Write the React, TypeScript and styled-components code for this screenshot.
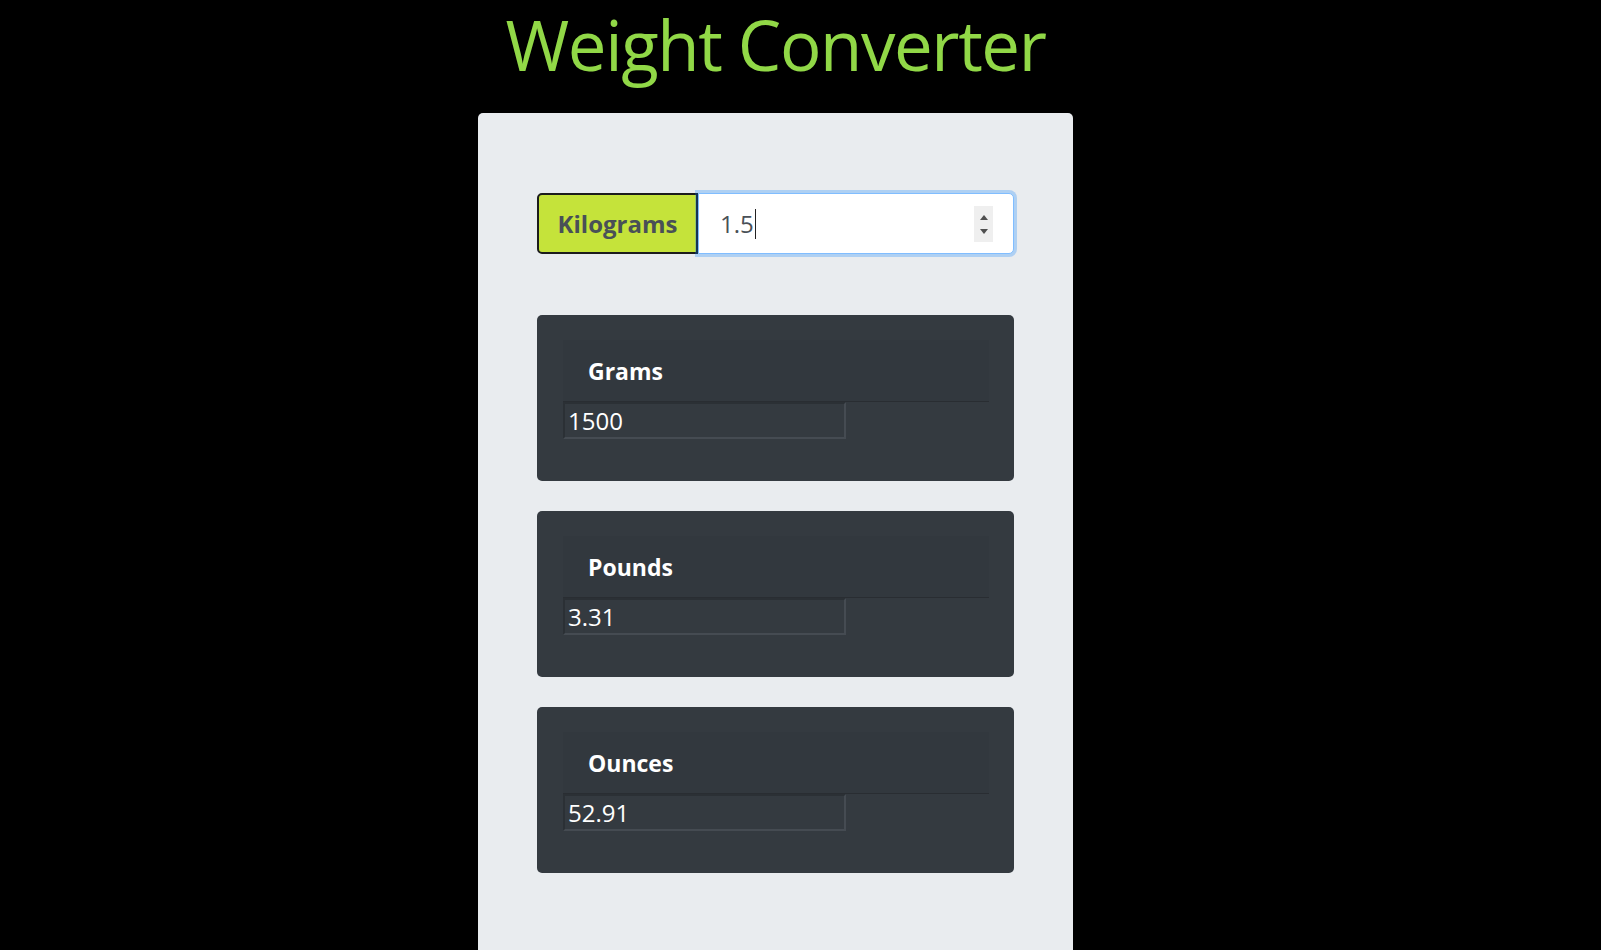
import React from 'react'
import styled, { createGlobalStyle } from 'styled-components'

const GlobalStyle = createGlobalStyle`
  html, body {
    margin: 0;
    padding: 0;
    background: #000;
  }
  body {
    font-family: "Open Sans", "Noto Sans", sans-serif;
  }
`

const Page = styled.div`
  width: 1551px;
  min-height: 950px;
  display: flex;
  flex-direction: column;
  align-items: center;
`

const Title = styled.h1`
  margin: 0 0 25px;
  font-size: 69px;
  line-height: 88px;
  font-weight: 400;
  color: #91d847;
  letter-spacing: -1.4px;
`

const Panel = styled.div`
  width: 595px;
  box-sizing: border-box;
  background: #e9ecef;
  border-radius: 5px 5px 0 0;
  padding: 80px 59px 120px;
  display: flex;
  flex-direction: column;
`

const InputGroup = styled.div`
  display: flex;
  height: 61px;
  margin-bottom: 61px;
`

const UnitLabel = styled.label`
  width: 161px;
  box-sizing: border-box;
  display: flex;
  align-items: center;
  justify-content: center;
  background: #c5e33a;
  border: 2px solid #1c1c1c;
  border-radius: 5px 0 0 5px;
  color: #495057;
  font-size: 24px;
  font-weight: 700;
`

const Field = styled.div`
  position: relative;
  flex: 1;
  display: flex;
  align-items: center;
  background: #fff;
  border: 1px solid #80bdff;
  border-radius: 0 5px 5px 0;
  box-shadow: 0 0 0 3px rgba(0, 123, 255, 0.25);
  padding-left: 21px;
  color: #495057;
  font-size: 24px;
`

const Caret = styled.span`
  display: inline-block;
  width: 1px;
  height: 30px;
  margin-left: 1px;
  background: #222;
`

const Spinner = styled.div`
  position: absolute;
  right: 20px;
  top: 12px;
  width: 19px;
  height: 36px;
  background: #efefef;
  display: flex;
  flex-direction: column;
  align-items: center;
  justify-content: center;
  gap: 9px;
`

const Arrow = styled.span<{ $down?: boolean }>`
  width: 0;
  height: 0;
  border-left: 4px solid transparent;
  border-right: 4px solid transparent;
  ${({ $down }) =>
    $down ? 'border-top: 5px solid #505050;' : 'border-bottom: 5px solid #505050;'}
`

const Card = styled.div`
  background: #343a40;
  border-radius: 5px;
  padding: 25px 25px 42px 26px;
  & + & {
    margin-top: 30px;
  }
`

const CardHeader = styled.div`
  height: 62px;
  box-sizing: border-box;
  display: flex;
  align-items: center;
  padding-left: 25px;
  background: rgba(0, 0, 0, 0.03);
  border-bottom: 1px solid rgba(0, 0, 0, 0.18);
  color: #fff;
  font-size: 23px;
  font-weight: 700;
`

const ValueBox = styled.input`
  display: block;
  width: 283px;
  height: 37px;
  box-sizing: border-box;
  margin: 0;
  padding: 0 3px;
  background: transparent;
  border: 2px solid;
  border-color: #2b3035 #454b52 #454b52 #2b3035;
  color: #fff;
  font-family: "Open Sans", "Noto Sans", sans-serif;
  font-size: 24px;
  outline: none;
`

const results = [
  { unit: 'Grams', value: '1500' },
  { unit: 'Pounds', value: '3.31' },
  { unit: 'Ounces', value: '52.91' },
]

export default function App() {
  return (
    <>
      <GlobalStyle />
      <Page>
        <Title>Weight Converter</Title>
        <Panel>
          <InputGroup>
            <UnitLabel>Kilograms</UnitLabel>
            <Field>
              <span>1.5</span>
              <Caret />
              <Spinner>
                <Arrow />
                <Arrow $down />
              </Spinner>
            </Field>
          </InputGroup>
          {results.map(({ unit, value }) => (
            <Card key={unit}>
              <CardHeader>{unit}</CardHeader>
              <ValueBox readOnly value={value} />
            </Card>
          ))}
        </Panel>
      </Page>
    </>
  )
}
